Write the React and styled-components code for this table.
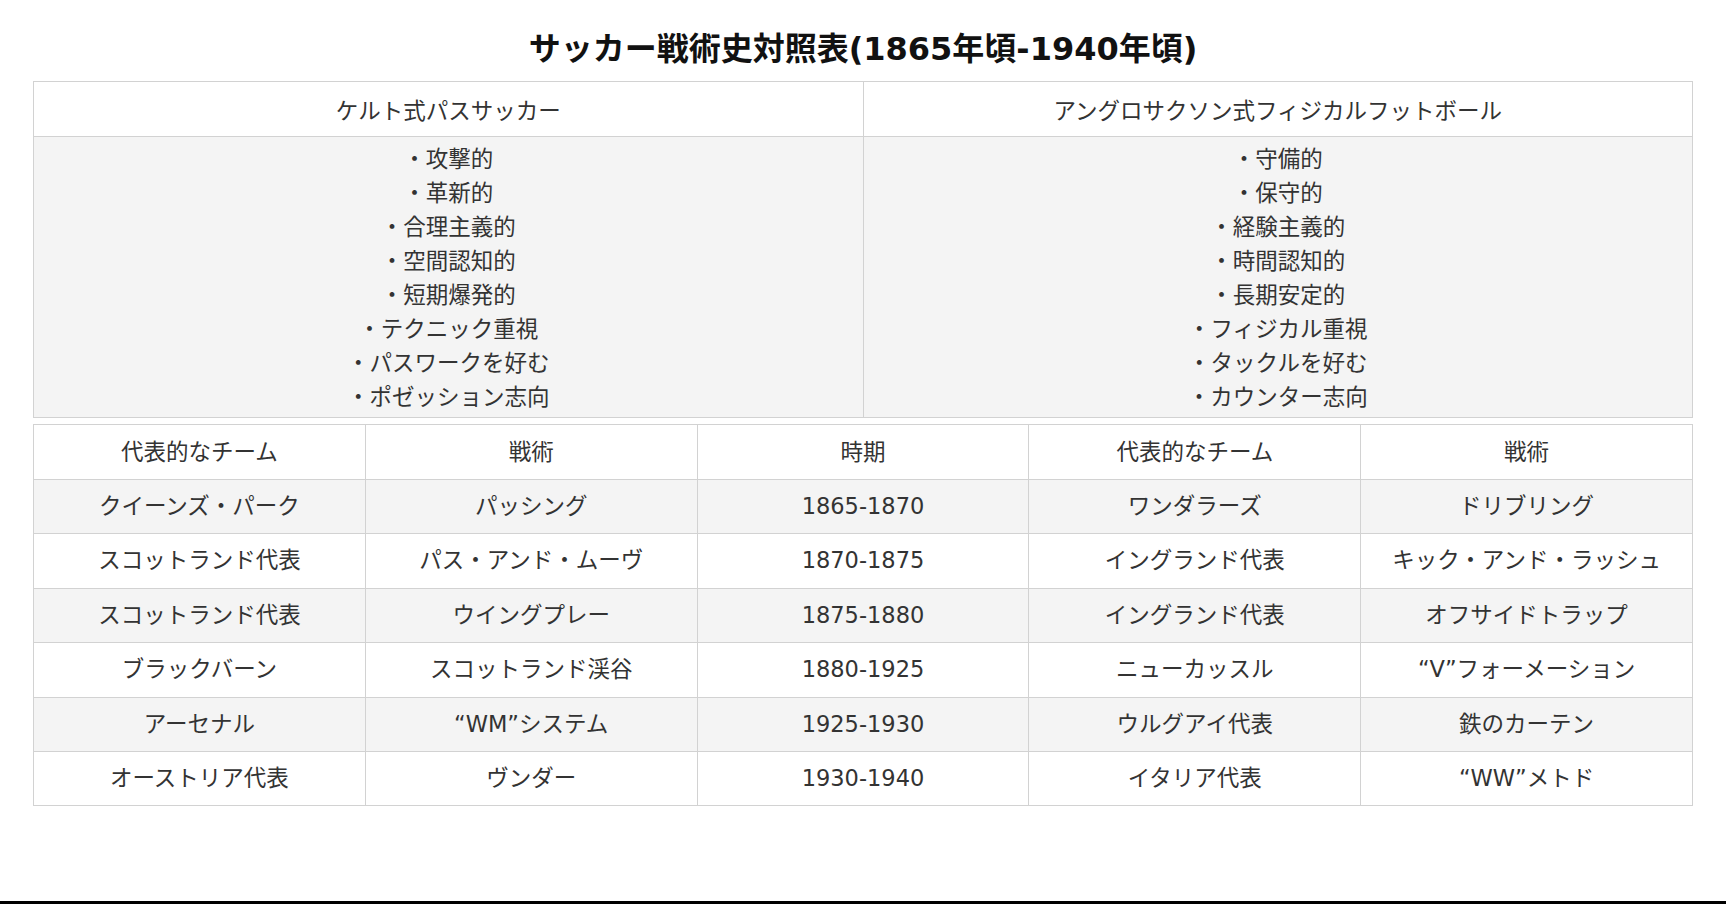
import React from 'react'
import styled, { createGlobalStyle } from 'styled-components'

const GlobalStyle = createGlobalStyle`
  html, body {
    margin: 0;
    padding: 0;
    background: #fff;
  }
  body {
    font-family: "DejaVu Sans", "Noto Sans CJK JP", sans-serif;
    color: #333;
  }
`

const Page = styled.div`
  display: flex;
  flex-direction: column;
  min-height: 100vh;
  box-sizing: border-box;
`

const Content = styled.main`
  flex: 1;
  padding: 0 33px;
`

const Title = styled.h1`
  margin: 29px 0 12px;
  font-size: 32px;
  line-height: 40px;
  font-weight: 700;
  color: #111;
  text-align: center;
`

const Table = styled.table`
  width: 100%;
  border-collapse: collapse;
  table-layout: fixed;
  margin-bottom: ${p => p.$gap || 0}px;
  font-size: 22.5px;
  color: #333;
`

const Row = styled.tr`
  background: ${p => (p.$shade ? '#f4f4f4' : '#fff')};
`

const Cell = styled.td`
  border: 1px solid #d2d2d2;
  text-align: center;
  padding: 12px 8px 12px;
  line-height: 29.4px;
  font-weight: 400;
`

const HeadCell = styled(Cell).attrs({ as: 'th' })`
  padding: ${p => (p.$low ? '14px 8px 10px' : '12px 8px')};
  line-height: 30px;
`

const ListCell = styled(Cell)`
  padding: 5px 8px 3px;
  line-height: 34px;
  vertical-align: top;
`

const TraitList = styled.ul`
  list-style: none;
  margin: 0;
  padding: 0;
`

const Trait = styled.li`
  &::before {
    content: '・';
  }
`

const BottomBar = styled.div`
  height: 3px;
  background: #000;
`

const celtic = [
  '攻撃的',
  '革新的',
  '合理主義的',
  '空間認知的',
  '短期爆発的',
  'テクニック重視',
  'パスワークを好む',
  'ポゼッション志向',
]

const anglo = [
  '守備的',
  '保守的',
  '経験主義的',
  '時間認知的',
  '長期安定的',
  'フィジカル重視',
  'タックルを好む',
  'カウンター志向',
]

const rows = [
  ['クイーンズ・パーク', 'パッシング', '1865-1870', 'ワンダラーズ', 'ドリブリング'],
  ['スコットランド代表', 'パス・アンド・ムーヴ', '1870-1875', 'イングランド代表', 'キック・アンド・ラッシュ'],
  ['スコットランド代表', 'ウイングプレー', '1875-1880', 'イングランド代表', 'オフサイドトラップ'],
  ['ブラックバーン', 'スコットランド渓谷', '1880-1925', 'ニューカッスル', '“V”フォーメーション'],
  ['アーセナル', '“WM”システム', '1925-1930', 'ウルグアイ代表', '鉄のカーテン'],
  ['オーストリア代表', 'ヴンダー', '1930-1940', 'イタリア代表', '“WW”メトド'],
]

const columns = ['代表的なチーム', '戦術', '時期', '代表的なチーム', '戦術']

export default function App() {
  return (
    <Page>
      <GlobalStyle />
      <Content>
        <Title>サッカー戦術史対照表(1865年頃-1940年頃)</Title>

        <Table $gap={6}>
          <thead>
            <Row>
              <HeadCell $low>ケルト式パスサッカー</HeadCell>
              <HeadCell $low>アングロサクソン式フィジカルフットボール</HeadCell>
            </Row>
          </thead>
          <tbody>
            <Row $shade>
              <ListCell>
                <TraitList>
                  {celtic.map(t => (
                    <Trait key={t}>{t}</Trait>
                  ))}
                </TraitList>
              </ListCell>
              <ListCell>
                <TraitList>
                  {anglo.map(t => (
                    <Trait key={t}>{t}</Trait>
                  ))}
                </TraitList>
              </ListCell>
            </Row>
          </tbody>
        </Table>

        <Table>
          <thead>
            <Row>
              {columns.map((c, i) => (
                <HeadCell key={i}>{c}</HeadCell>
              ))}
            </Row>
          </thead>
          <tbody>
            {rows.map((r, i) => (
              <Row key={i} $shade={i % 2 === 0}>
                {r.map((c, j) => (
                  <Cell key={j}>{c}</Cell>
                ))}
              </Row>
            ))}
          </tbody>
        </Table>
      </Content>
      <BottomBar />
    </Page>
  )
}
